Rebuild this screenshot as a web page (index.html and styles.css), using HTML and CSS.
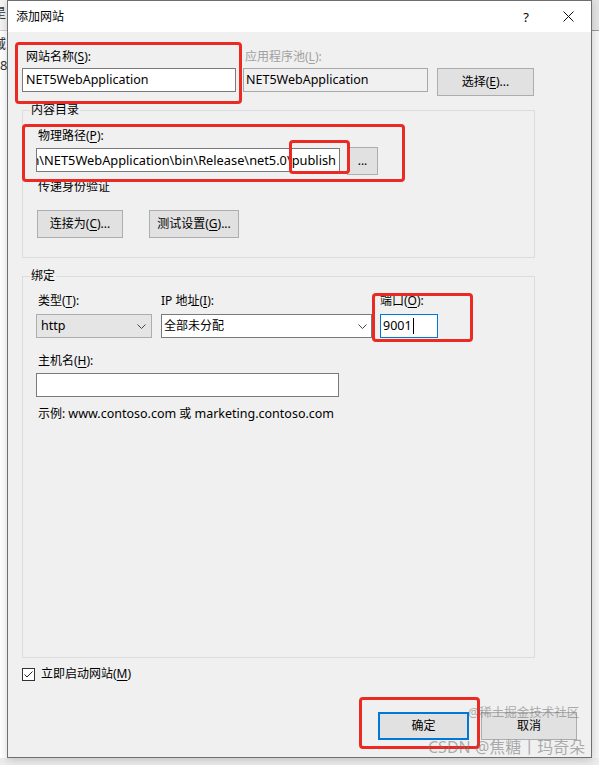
FILE: index.html
```html
<!DOCTYPE html>
<html lang="zh">
<head>
<meta charset="utf-8">
<link rel="stylesheet" href="styles.css">
</head>
<body>
<div class="desktop">
  <div class="bg-left">
    <div class="bg-left-top"><span class="frag frag1">是</span></div>
    <span class="frag frag2">域</span>
    <span class="frag frag3">8</span>
  </div>
  <div class="bg-right"><div class="bg-right-top"></div></div>

  <div class="dialog">
    <div class="titlebar">
      <span class="title">添加网站</span>
      <span class="help">?</span>
      <svg class="close" width="11" height="11" viewBox="0 0 11 11"><path d="M0.5 0.5L10.5 10.5M10.5 0.5L0.5 10.5" stroke="#111" stroke-width="1" fill="none"/></svg>
    </div>
    <div class="content">
      <div class="toprow">
        <div class="field f-name">
          <div class="label">网站名称(<u>S</u>):</div>
          <div class="input lat">NET5WebApplication</div>
        </div>
        <div class="field f-pool">
          <div class="label disabled">应用程序池(<u>L</u>):</div>
          <div class="input input-disabled lat">NET5WebApplication</div>
        </div>
        <div class="btn btn-select">选择(<u>E</u>)...</div>
      </div>

      <fieldset class="group g-content">
        <legend>内容目录</legend>
        <div class="label">物理路径(<u>P</u>):</div>
        <div class="path-row">
          <div class="input input-path lat"><span>NET5WebApplication\NET5WebApplication\bin\Release\net5.0\publish</span></div>
          <div class="btn btn-browse">...</div>
        </div>
        <div class="label label-auth">传递身份验证</div>
        <div class="auth-row">
          <div class="btn btn-connect">连接为(<u>C</u>)...</div>
          <div class="btn btn-test">测试设置(<u>G</u>)...</div>
        </div>
      </fieldset>

      <fieldset class="group g-bind">
        <legend>绑定</legend>
        <div class="bind-row">
          <div class="field f-type">
            <div class="label label-type">类型(<u>T</u>):</div>
            <div class="combo combo-type"><span class="lat">http</span>
              <svg class="chev" width="9" height="5" viewBox="0 0 9 5"><path d="M0.5 0.5L4.5 4.5L8.5 0.5" stroke="#444" stroke-width="1" fill="none"/></svg>
            </div>
          </div>
          <div class="field f-ip">
            <div class="label label-flush">IP 地址(<u>I</u>):</div>
            <div class="combo combo-ip"><span>全部未分配</span>
              <svg class="chev" width="9" height="5" viewBox="0 0 9 5"><path d="M0.5 0.5L4.5 4.5L8.5 0.5" stroke="#444" stroke-width="1" fill="none"/></svg>
            </div>
          </div>
          <div class="field f-port">
            <div class="label label-flush">端口(<u>O</u>):</div>
            <div class="input input-port"><span class="lat">9001</span><i class="caret"></i></div>
          </div>
        </div>
        <div class="label label-host">主机名(<u>H</u>):</div>
        <div class="input input-host"></div>
        <div class="label label-example">示例: <span class="lat">www.contoso.com</span> 或 <span class="lat">marketing.contoso.com</span></div>
      </fieldset>

      <div class="check-row">
        <svg class="checkbox" width="13" height="13" viewBox="0 0 13 13"><rect x="0.5" y="0.5" width="12" height="12" fill="#fff" stroke="#333"/><path d="M2.5 6.5L5 9L10.5 3.5" stroke="#222" stroke-width="1" fill="none"/></svg>
        <span class="check-label">立即启动网站(<u>M</u>)</span>
      </div>

      <div class="button-row">
        <div class="btn btn-ok">确定</div>
        <div class="btn btn-cancel">取消</div>
      </div>
    </div>
  </div>

  <div class="mark mark1"></div>
  <div class="mark mark2"></div>
  <div class="mark mark3"></div>
  <div class="mark mark4"></div>
  <div class="mark mark5"></div>

  <div class="wm wm1">@稀土掘金技术社区</div>
  <div class="wm wm2">CSDN @焦糖丨玛奇朵</div>
</div>
</body>
</html>
```

FILE: styles.css
```css
* { box-sizing: border-box; }
html, body { margin: 0; padding: 0; }
body {
  width: 599px;
  height: 765px;
  overflow: hidden;
  background: #ececec;
  font-family: "Noto Sans", "Noto Sans CJK SC", sans-serif;
  font-size: 12px;
  color: #000;
}
.desktop { position: relative; width: 599px; height: 765px; }

.lat { font-size: 12.5px; }

.bg-left {
  position: absolute; left: 0; top: 0; width: 8px; height: 758px;
  background: #fff; overflow: hidden;
}
.bg-left-top { height: 31px; background: #f3f3f3; border-bottom: 1px solid #cfcfcf; }
.frag { position: absolute; font-size: 13px; line-height: 16px; color: #333; }
.frag1 { left: -7px; top: 4px; }
.frag2 { left: -7px; top: 35px; }
.frag3 { left: 0px; top: 57px; }

.bg-right {
  position: absolute; left: 592px; top: 0; width: 7px; height: 758px;
  background: #f4f4f4;
}
.bg-right-top { height: 31px; background: #e3e3e3; border-bottom: 1px solid #9a9a9a; }

.dialog {
  position: absolute; left: 7px; top: 0; width: 585px; height: 758px;
  border: 1px solid #6f6f6f;
  background: #f0f0f0;
  box-shadow: 0 2px 8px rgba(0,0,0,0.18);
}
.titlebar {
  height: 31px; background: #fff;
  display: flex; align-items: center;
  padding-left: 8px;
}
.title { font-size: 12px; line-height: 16px; }
.help { margin-left: auto; font-size: 13px; line-height: 16px; margin-right: 34px; }
.close { margin-right: 17px; }

.content { padding: 17px 14px 0 14px; }

.label { line-height: 16px; white-space: nowrap; }
.disabled { color: #a0a0a0; }
u { text-decoration: underline; text-underline-offset: 2px; }

.input {
  height: 24px; border: 1px solid #7a7a7a; background: #fff;
  line-height: 22px; padding-left: 3px; white-space: nowrap; overflow: hidden;
}
.input-disabled { background: #f0f0f0; border-color: #a8a8a8; padding-left: 2px; }

.btn {
  display: flex; align-items: center; justify-content: center;
  height: 28px; background: #e1e1e1; border: 1px solid #adadad;
  white-space: nowrap; line-height: 16px;
}

.toprow { display: flex; align-items: flex-start; }
.field .label { margin-bottom: 3px; }
.f-name { width: 214px; }
.f-name .label { padding-left: 4px; }
.f-pool { width: 185px; margin-left: 7px; }
.f-pool .label { padding-left: 2px; }
.btn-select { width: 97px; margin-left: 9px; margin-top: 19px; }

.group {
  border: 1px solid #dcdcdc;
  margin: 0;
  width: 513px;
  padding: 10px 0 0 13px;
  min-inline-size: 0;
}
.group legend {
  margin-left: -6px; padding: 0 1px;
  line-height: 16px; font-size: 12px;
}
.g-content { margin-top: 6px; height: 156px; }
.g-content > .label { padding-left: 2px; }
.path-row { display: flex; align-items: flex-start; margin-top: 3px; }
.input-path {
  width: 304px; margin-top: 1px;
  display: flex; justify-content: flex-end; padding-right: 3px; padding-left: 0;
  font-size: 12.8px;
}
.btn-browse { width: 31px; margin-left: 7px; }
.g-content > .label-auth { margin-top: 4px; }
.auth-row { display: flex; margin-top: 15px; }
.btn-connect { width: 86px; margin-left: 1px; }
.btn-test { width: 90px; margin-left: 26px; }

.g-bind { margin-top: 10px; height: 390px; padding-top: 9px; }
.bind-row { display: flex; align-items: flex-start; }
.bind-row .field .label { margin-bottom: 5px; }
.label-type { padding-left: 2px; }
.f-type { width: 116px; }
.f-ip { width: 211px; margin-left: 9px; }
.f-port { width: 58px; margin-left: 8px; }
.combo {
  height: 24px; display: flex; align-items: center; justify-content: space-between;
  line-height: 16px; padding: 0 5px 0 3px;
}
.combo-type { background: #e5e5e5; border: 1px solid #adadad; padding-left: 4px; }
.combo-ip { background: #fff; border: 1px solid #7a7a7a; padding-left: 2px; padding-right: 4px; }
.input-port { border-color: #0078d7; padding-left: 2px; display: flex; align-items: center; }
.caret { display: inline-block; width: 1px; height: 16px; background: #000; margin-left: 1px; }
.label-host { padding-left: 2px; margin-top: 15px; }
.input-host { width: 303px; margin-top: 4px; }
.label-example { padding-left: 2px; margin-top: 9px; }

.check-row { display: flex; align-items: center; margin-top: 9px; height: 14px; }
.checkbox { display: block; }
.check-label { margin-left: 6px; line-height: 16px; }

.button-row { display: flex; justify-content: flex-end; margin-top: 31px; }
.btn-ok { width: 91px; border: 2px solid #0078d7; }
.btn-cancel { width: 96px; margin-left: 12px; }

.mark {
  position: absolute;
  border: 3px solid #ec2a24;
  border-radius: 4px;
}
.mark1 { left: 15px; top: 42px; width: 227px; height: 62px; }
.mark2 { left: 22px; top: 124px; width: 383px; height: 58px; }
.mark3 { left: 289px; top: 140px; width: 61px; height: 34px; }
.mark4 { left: 372px; top: 293px; width: 101px; height: 49px; }
.mark5 { left: 359px; top: 697px; width: 121px; height: 52px; }

.wm { position: absolute; white-space: nowrap; color: rgba(110,110,110,0.55); }
.wm1 { left: 468px; top: 704px; font-size: 12.5px; line-height: 18px; }
.wm2 { left: 428px; top: 736px; font-size: 16px; line-height: 22px; }
```
